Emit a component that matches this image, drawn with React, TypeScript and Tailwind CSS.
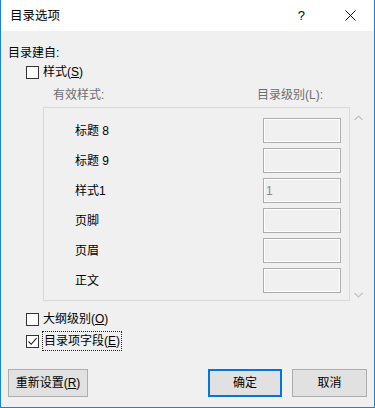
const FONT = "font-['Liberation_Sans','Noto_Sans_CJK_SC',sans-serif]";

const rows = [
  { name: "标题 8", level: "" },
  { name: "标题 9", level: "" },
  { name: "样式1", level: "1" },
  { name: "页脚", level: "" },
  { name: "页眉", level: "" },
  { name: "正文", level: "" },
];

function CheckBox({ checked }: { checked?: boolean }) {
  return (
    <div className="w-[13px] h-[13px] border border-[#333333] bg-white flex items-center justify-center shrink-0">
      {checked && (
        <svg width="11" height="11" viewBox="0 0 11 11">
          <path d="M1.5 5.5 L4.2 8.3 L9.5 2.2" fill="none" stroke="#222" strokeWidth="1.1" />
        </svg>
      )}
    </div>
  );
}

function Chevron({ up }: { up?: boolean }) {
  return (
    <svg width="9" height="6" viewBox="0 0 9 6">
      <path
        d={up ? "M0.5 5 L4.5 1 L8.5 5" : "M0.5 1 L4.5 5 L8.5 1"}
        fill="none"
        stroke="#c2c2c2"
        strokeWidth="1.2"
      />
    </svg>
  );
}

export default function App() {
  return (
    <div className={`w-[375px] h-[408px] flex flex-col bg-[#f0f0f0] border-l border-r border-b border-[#1883d7] text-[12px] text-black leading-none ${FONT}`}>
      {/* title bar */}
      <div className="h-[31px] bg-white flex items-center shrink-0">
        <span className="ml-[9px] mt-[1px] text-[12.5px]">目录选项</span>
        <span className="ml-auto mr-[40px] text-[13px]">?</span>
        <svg className="mr-[18px]" width="11" height="11" viewBox="0 0 11 11">
          <path d="M0.5 0.5 L10.5 10.5 M10.5 0.5 L0.5 10.5" stroke="#111" strokeWidth="1" />
        </svg>
      </div>

      <div className="flex flex-col px-[7px]">
        <div className="mt-[14px] h-[16px] flex items-center">目录建自:</div>

        <div className="mt-[3px] h-[16px] flex items-center gap-[4px] pl-[18px]">
          <CheckBox />
          <span>
            样式(<span className="underline">S</span>)
          </span>
        </div>

        <div className="mt-[7px] h-[16px] flex items-center text-[#6d6d6d] pl-[45px] pr-[44px]">
          <span>有效样式:</span>
          <span className="ml-auto">目录级别(L):</span>
        </div>

        <div className="mt-[4px] ml-[35px] flex">
          <div className="w-[309px] h-[194px] border border-[#d9d9d9] flex flex-col gap-[5px] pt-[10px] pr-[8px]">
            {rows.map((r) => (
              <div key={r.name} className="h-[25px] flex items-center">
                <span className="ml-[31px] mt-[1px]">{r.name}</span>
                <div className="ml-auto w-[78px] h-[25px] border border-[#adadad] flex items-center">
                  <div className="w-full h-full border border-white flex items-center pl-[1px] text-[#8a8a8a]">
                    {r.level}
                  </div>
                </div>
              </div>
            ))}
          </div>
          <div className="w-[17px] flex flex-col items-center pt-[8px] pb-[3px] justify-between">
            <Chevron up />
            <Chevron />
          </div>
        </div>

        <div className="mt-[10px] h-[16px] flex items-center gap-[4px] pl-[18px]">
          <CheckBox />
          <span>
            大纲级别(<span className="underline">O</span>)
          </span>
        </div>

        <div className="mt-[4px] h-[20px] flex items-center gap-[3px] pl-[18px]">
          <CheckBox checked />
          <span className="h-[20px] px-[1px] flex items-center border border-dotted border-[#222]">
            目录项字段(<span className="underline">E</span>)
          </span>
        </div>

        <div className="mt-[18px] flex items-center">
          <div className="w-[80px] h-[28px] bg-[#e1e1e1] border border-[#adadad] flex items-center justify-center">
            重新设置(<span className="underline">R</span>)
          </div>
          <div className="ml-auto w-[74px] h-[28px] bg-[#e1e1e1] border-2 border-[#0078d7] flex items-center justify-center">
            确定
          </div>
          <div className="ml-[10px] w-[75px] h-[28px] bg-[#e1e1e1] border border-[#adadad] flex items-center justify-center">
            取消
          </div>
        </div>
      </div>
    </div>
  );
}
